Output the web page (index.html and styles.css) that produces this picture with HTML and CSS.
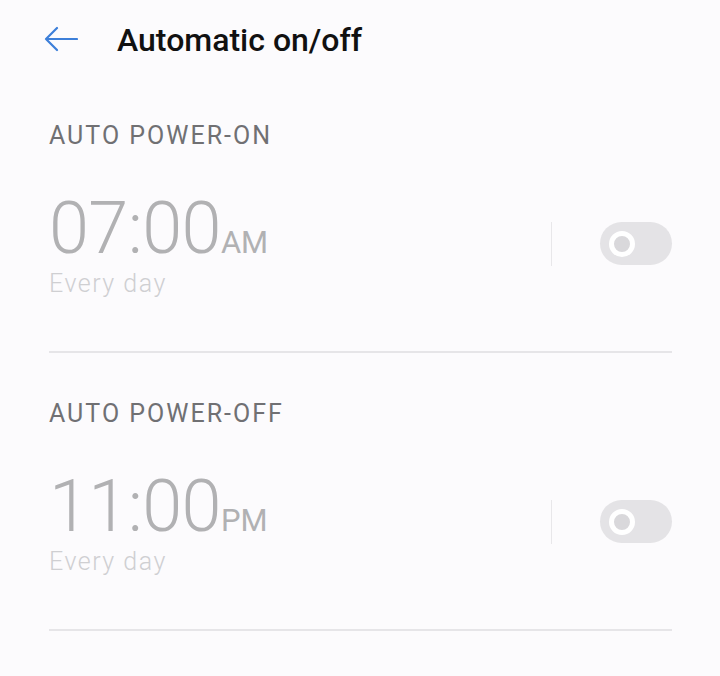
FILE: index.html
```html
<!DOCTYPE html>
<html lang="en">

<head>
    <meta charset="UTF-8">
    <meta name="viewport" content="width=device-width, initial-scale=1.0">
    <title>Automatic on/off</title>
    <link rel="stylesheet" href="styles.css">
</head>

<body>
    <header class="topbar">
        <button class="back" aria-label="Back">
            <svg width="34" height="26" viewBox="0 0 34 26">
                <path d="M13 2 L2 13 L13 24 M2 13 H33" fill="none" stroke="#3d7fd9" stroke-width="2.2"
                    stroke-linecap="round" stroke-linejoin="round" />
            </svg>
        </button>
        <h1>Automatic on/off</h1>
    </header>

    <main class="panel">
        <section class="schedule">
            <h2>AUTO POWER-ON</h2>
            <div class="row">
                <div class="time">
                    <div class="clock">07:00<span class="ampm">AM</span></div>
                    <div class="repeat">Every day</div>
                </div>
                <span class="sep"></span>
                <span class="switch"><span class="knob"></span></span>
            </div>
        </section>

        <section class="schedule">
            <h2>AUTO POWER-OFF</h2>
            <div class="row">
                <div class="time">
                    <div class="clock">11:00<span class="ampm">PM</span></div>
                    <div class="repeat">Every day</div>
                </div>
                <span class="sep"></span>
                <span class="switch"><span class="knob"></span></span>
            </div>
        </section>
    </main>
</body>

</html>
```

FILE: styles.css
```css
body {
    margin: 0;
    padding: 0;
    background-color: #fcfbfd;
    font-family: Roboto, "Noto Sans", Arial, sans-serif;
    height: 676px;
    overflow: hidden;
}

.topbar {
    display: flex;
    align-items: center;
    height: 78px;
    padding-left: 44px;
}

.back {
    border: none;
    background: none;
    padding: 0;
    width: 36px;
    height: 28px;
    display: flex;
    align-items: center;
    cursor: pointer;
}

.topbar h1 {
    margin: 0 0 0 37px;
    padding-top: 2px;
    font-size: 32px;
    font-weight: 500;
    color: #111;
    line-height: 36px;
}

.panel {
    margin-left: 32px;
    margin-right: 14px;
    padding-left: 17px;
    padding-right: 34px;
}

.schedule {
    padding-top: 44px;
    border-bottom: 2px solid #e6e5e8;
}

.schedule+.schedule {
    padding-top: 47px;
}

.schedule h2 {
    margin: 0;
    font-size: 25px;
    font-weight: 400;
    line-height: 28px;
    letter-spacing: 2px;
    color: #707073;
}

.row {
    display: flex;
    align-items: flex-start;
    margin-top: 43px;
    padding-bottom: 53px;
}

.time {
    flex: 1;
}

.clock {
    font-size: 72px;
    font-weight: 300;
    line-height: 72px;
    letter-spacing: -0.6px;
    color: #b1b1b3;
}

.ampm {
    font-size: 31px;
    font-weight: 400;
    letter-spacing: 0;
}

.repeat {
    margin-top: -9px;
    font-size: 25px;
    line-height: 28px;
    font-weight: 300;
    letter-spacing: 1.5px;
    color: #cfcfd2;
}

.sep {
    width: 1px;
    height: 44px;
    margin-top: 29px;
    background-color: #e8e7ea;
    margin-right: 48px;
}

.switch {
    width: 72px;
    height: 43px;
    margin-top: 29px;
    border-radius: 22px;
    background-color: #e4e3e6;
    display: flex;
    align-items: center;
    padding-left: 9px;
    box-sizing: border-box;
}

.knob {
    width: 16px;
    height: 16px;
    border-radius: 50%;
    border: 5px solid #fff;
    background-color: #d9d8db;
}
```
